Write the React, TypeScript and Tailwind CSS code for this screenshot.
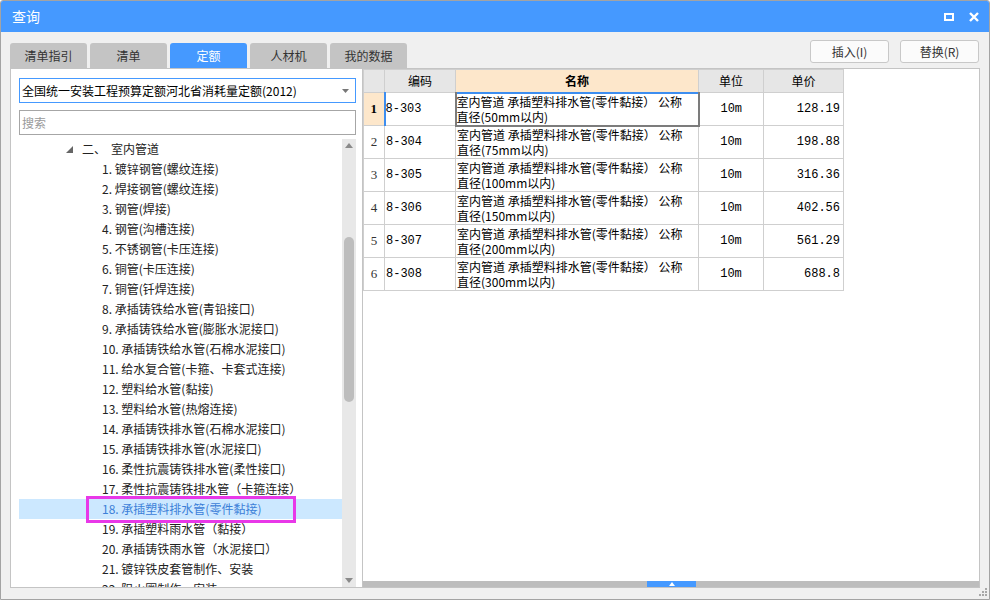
import React from 'react';

const cjk = '"Noto Sans CJK SC", "Noto Sans", sans-serif';

const treeItems = [
  '1. 镀锌钢管(螺纹连接)',
  '2. 焊接钢管(螺纹连接)',
  '3. 钢管(焊接)',
  '4. 钢管(沟槽连接)',
  '5. 不锈钢管(卡压连接)',
  '6. 铜管(卡压连接)',
  '7. 铜管(钎焊连接)',
  '8. 承插铸铁给水管(青铅接口)',
  '9. 承插铸铁给水管(膨胀水泥接口)',
  '10. 承插铸铁给水管(石棉水泥接口)',
  '11. 给水复合管(卡箍、卡套式连接)',
  '12. 塑料给水管(黏接)',
  '13. 塑料给水管(热熔连接)',
  '14. 承插铸铁排水管(石棉水泥接口)',
  '15. 承插铸铁排水管(水泥接口)',
  '16. 柔性抗震铸铁排水管(柔性接口)',
  '17. 柔性抗震铸铁排水管（卡箍连接）',
  '18. 承插塑料排水管(零件黏接)',
  '19. 承插塑料雨水管（黏接）',
  '20. 承插铸铁雨水管（水泥接口）',
  '21. 镀锌铁皮套管制作、安装',
  '22. 阻火圈制作、安装',
];

const rows = [
  { no: 1, code: '8-303', size: '50mm', unit: '10m', price: '128.19' },
  { no: 2, code: '8-304', size: '75mm', unit: '10m', price: '198.88' },
  { no: 3, code: '8-305', size: '100mm', unit: '10m', price: '316.36' },
  { no: 4, code: '8-306', size: '150mm', unit: '10m', price: '402.56' },
  { no: 5, code: '8-307', size: '200mm', unit: '10m', price: '561.29' },
  { no: 6, code: '8-308', size: '300mm', unit: '10m', price: '688.8' },
];

const tabs = ['清单指引', '清单', '定额', '人材机', '我的数据'];

const Tree = () => (
  <div className="flex flex-1 mt-[4px] min-h-0">
    <div className="flex-1 overflow-hidden text-[12px] text-[#222]">
      <div className="h-5 flex items-center">
        <svg width="7" height="7" className="ml-[47px]" viewBox="0 0 7 7">
          <path d="M7 0 L7 7 L0 7 Z" fill="#666" />
        </svg>
        <span className="ml-[9px] leading-5">二、</span>
        <span className="ml-[5px] leading-5">室内管道</span>
      </div>
      {treeItems.map((t, i) =>
        i === 17 ? (
          <div key={t} className="h-5 leading-5 pl-[83px] bg-[#cce8ff] text-[#3c80d8] relative whitespace-nowrap">
            {t}
            <div className="absolute left-[67px] top-[-3px] w-[210px] h-[27px] border-[3px] border-[#e838e8]" />
          </div>
        ) : (
          <div key={t} className="h-5 leading-5 pl-[83px] whitespace-nowrap">
            {t}
          </div>
        ),
      )}
    </div>
    <div className="w-[14px] bg-[#e8e8e8] flex flex-col items-center">
      <svg width="8" height="5" className="mt-[4px]" viewBox="0 0 8 5">
        <path d="M4 0 L8 5 L0 5 Z" fill="#8a8a8a" />
      </svg>
      <div className="mt-[89px] w-[10px] h-[165px] rounded-full bg-[#bdbdbd]" />
      <div className="flex-1" />
      <svg width="8" height="5" className="mb-[4px]" viewBox="0 0 8 5">
        <path d="M0 0 L8 0 L4 5 Z" fill="#8a8a8a" />
      </svg>
    </div>
  </div>
);

const ResultTable = () => (
  <table className="border-collapse table-fixed text-[12px] text-black" style={{ fontFamily: cjk }}>
    <thead>
      <tr className="h-[23px]">
        <th className="w-[21px] bg-[#e6e6e6] border border-[#cfcfcf] font-normal" />
        <th className="w-[71px] bg-[#e6e6e6] border border-[#cfcfcf] font-normal">编码</th>
        <th className="w-[243px] bg-[#fde7cb] border border-[#cfcfcf] font-bold">名称</th>
        <th className="w-[65px] bg-[#e6e6e6] border border-[#cfcfcf] font-normal">单位</th>
        <th className="w-[80px] bg-[#e6e6e6] border border-[#cfcfcf] font-normal">单价</th>
      </tr>
    </thead>
    <tbody>
      {rows.map((r) => {
        const first = r.no === 1;
        return (
          <tr key={r.no} className="h-[33px]">
            <td
              className={
                first
                  ? 'bg-[#fde7cb] border border-[#cfcfcf] p-0 text-center font-bold text-[13px] font-["Liberation_Serif"]'
                  : 'border border-[#cfcfcf] p-0 text-center text-[13px] text-[#333] font-["Liberation_Serif"]'
              }
            >
              {r.no}
            </td>
            <td
              className={
                first
                  ? 'border border-[#cfcfcf] border-l-2 border-l-[#3d8ef0] p-0 font-["Liberation_Mono"]'
                  : 'border border-[#cfcfcf] py-0 pr-0 pl-[1px] font-["Liberation_Mono"]'
              }
            >
              {r.code}
            </td>
            <td
              className={
                first
                  ? 'border-2 border-[#7c7c7c] border-t-[#3d8ef0] p-0 leading-[15.5px] whitespace-nowrap align-middle'
                  : 'border border-[#cfcfcf] py-0 pr-0 pl-[1px] leading-[15.5px] whitespace-nowrap align-middle'
              }
            >
              室内管道 承插塑料排水管(零件黏接） 公称
              <br />
              直径({r.size}以内)
            </td>
            <td
              className={
                first
                  ? 'border border-[#cfcfcf] border-t-[#3d8ef0] p-0 text-center font-["Liberation_Mono"]'
                  : 'border border-[#cfcfcf] p-0 text-center font-["Liberation_Mono"]'
              }
            >
              {r.unit}
            </td>
            <td className='border border-[#cfcfcf] py-0 pl-0 pr-[3px] text-right font-["Liberation_Mono"]'>{r.price}</td>
          </tr>
        );
      })}
    </tbody>
  </table>
);

export default function App() {
  return (
    <div
      className="w-[990px] h-[600px] flex flex-col bg-[#f0f0f0] border border-[#a3a3a3] rounded-t-[3px] relative overflow-hidden"
      style={{ fontFamily: cjk }}
    >
      <div className="h-[31px] shrink-0 bg-[#4599ff] flex items-center text-white">
        <span className="pl-[11px] text-[14px]">查询</span>
        <div className="flex-1" />
        <svg width="10" height="8" viewBox="0 0 10 8" className="mr-[15px]">
          <rect x="1" y="1" width="8" height="6" fill="none" stroke="#fff" strokeWidth="2" />
        </svg>
        <svg width="10" height="10" viewBox="0 0 10 10" className="mr-[10px]">
          <path d="M1 1 L9 9 M9 1 L1 9" stroke="#fff" strokeWidth="2.4" />
        </svg>
      </div>

      <div className="flex-1 flex flex-col px-[9px] min-h-0">
        <div className="h-[36px] shrink-0 flex justify-between">
          <div className="flex gap-[3px] items-end">
            {tabs.map((t) =>
              t === '定额' ? (
                <div key={t} className="w-[77px] h-[25px] rounded-t-[3px] bg-[#4599ff] text-white text-[12px] flex items-center justify-center">
                  {t}
                </div>
              ) : (
                <div key={t} className="w-[77px] h-[25px] rounded-t-[3px] bg-[#c4c4c4] text-[#333] text-[12px] flex items-center justify-center">
                  {t}
                </div>
              ),
            )}
          </div>
          <div className="flex gap-[11px] pt-[8px] pr-[1px]">
            <button className="w-[79px] h-[23px] rounded-[3px] border border-[#c8c8c8] bg-[#fbfbfb] text-[12px] text-[#333]">
              插入(I)
            </button>
            <button className="w-[79px] h-[23px] rounded-[3px] border border-[#c8c8c8] bg-[#fbfbfb] text-[12px] text-[#333]">
              替换(R)
            </button>
          </div>
        </div>

        <div className="h-[520px] shrink-0 flex">
          <div className="w-[352px] bg-white border border-r-0 border-[#c4c4c4] flex flex-col pl-[8px] pr-[6px]">
            <div className="mt-[9px] h-[25px] shrink-0 border border-[#4599ff] flex items-center pl-[2px] pr-[6px] text-[12px] text-black">
              <span className="flex-1 whitespace-nowrap">全国统一安装工程预算定额河北省消耗量定额(2012)</span>
              <svg width="7" height="4" viewBox="0 0 7 4">
                <path d="M0 0 L7 0 L3.5 4 Z" fill="#777" />
              </svg>
            </div>
            <div className="mt-[7px] h-[25px] shrink-0 border border-[#a6a6a6] flex items-center pl-[2px] text-[12px] text-[#9a9a9a]">
              搜索
            </div>
            <Tree />
          </div>

          <div className="flex-1 bg-white border border-[#c4c4c4] flex flex-col">
            <div className="flex-1 overflow-hidden">
              <ResultTable />
            </div>
            <div className="h-[6px] shrink-0 bg-[#bdbdbd] flex">
              <div className="ml-[284px] w-[49px] h-full bg-[#4599ff] flex items-center justify-center">
                <svg width="6" height="4" viewBox="0 0 6 4">
                  <path d="M3 0 L6 4 L0 4 Z" fill="#fff" />
                </svg>
              </div>
            </div>
          </div>
        </div>
      </div>

      <svg width="10" height="10" viewBox="0 0 10 10" className="absolute right-[1px] bottom-[2px]">
        <rect x="7" y="1" width="2" height="2" fill="#a8a8a8" />
        <rect x="4" y="4" width="2" height="2" fill="#a8a8a8" />
        <rect x="7" y="4" width="2" height="2" fill="#a8a8a8" />
        <rect x="1" y="7" width="2" height="2" fill="#a8a8a8" />
        <rect x="4" y="7" width="2" height="2" fill="#a8a8a8" />
        <rect x="7" y="7" width="2" height="2" fill="#a8a8a8" />
      </svg>
    </div>
  );
}
